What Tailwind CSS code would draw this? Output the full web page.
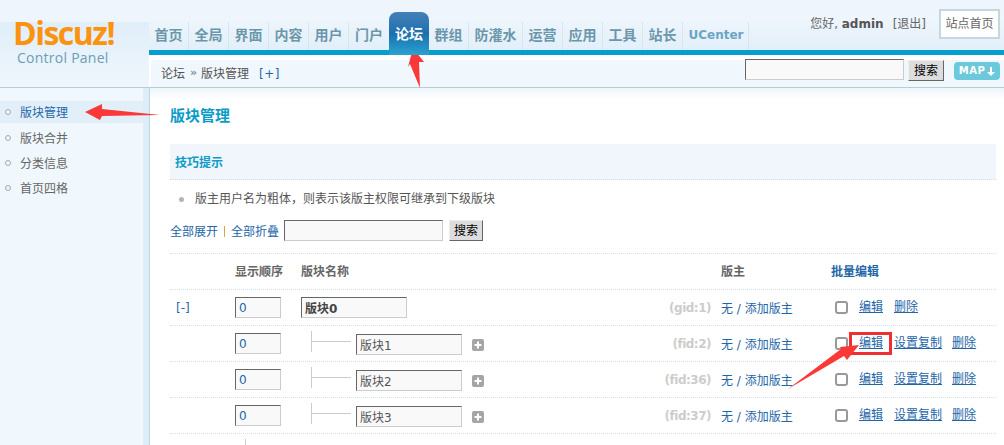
<!DOCTYPE html>
<html lang="zh-CN">
<head>
    <meta charset="UTF-8">
    <title>Discuz! Control Panel</title>
    <script src="https://cdn.jsdelivr.net/npm/@tailwindcss/browser@4"></script>
</head>
<body class="relative w-[1004px] h-[445px] overflow-hidden bg-white text-[12px] text-[#666] font-['DejaVu_Sans','Noto_Sans_CJK_SC',sans-serif]">
    <!-- header -->
    <header class="flex h-[88px] border-b border-[#b8cdd6] bg-white">
        <div class="w-[149px] h-[87px] bg-[#eef5fc]">
            <div class="mt-[22px] h-[61px] w-[149px] pl-[13px] bg-gradient-to-b from-[#e0eef9] to-[#eef6fc]">
                <div class="text-[32px] leading-[22px] font-bold tracking-[-1.5px] text-[#fb9311] font-['Open_Sans',sans-serif]">Discuz!</div>
                <div class="pl-[4px] mt-[5px] text-[14px] leading-[18px] tracking-[0.25px] text-[#6c9eb4] font-['Open_Sans',sans-serif]">Control Panel</div>
            </div>
        </div>
        <div class="flex-1 flex flex-col">
            <div class="flex justify-between h-[50px] bg-gradient-to-b from-[#eef5fc] from-40% to-[#e2eff9]">
                <nav class="flex items-end h-[50px] text-[14px] font-bold text-[#6b97ab]">
                    <a class="w-10 h-[28px] leading-[27px] text-center border-r border-[#d8e6ef]">首页</a>
                    <a class="w-10 h-[28px] leading-[27px] text-center border-r border-[#d8e6ef]">全局</a>
                    <a class="w-10 h-[28px] leading-[27px] text-center border-r border-[#d8e6ef]">界面</a>
                    <a class="w-10 h-[28px] leading-[27px] text-center border-r border-[#d8e6ef]">内容</a>
                    <a class="w-10 h-[28px] leading-[27px] text-center border-r border-[#d8e6ef]">用户</a>
                    <a class="w-10 h-[28px] leading-[27px] text-center">门户</a>
                    <a class="relative z-10 w-10 h-[43px] -mb-[5px] pt-[12px] leading-[20px] text-center text-white rounded-t-[8px] bg-gradient-to-b from-[#4480b8] via-[#1b70ae] to-[#2aa3d0]">论坛</a>
                    <a class="w-10 h-[28px] leading-[27px] text-center border-r border-[#d8e6ef]">群组</a>
                    <a class="w-[54px] h-[28px] leading-[27px] text-center border-r border-[#d8e6ef]">防灌水</a>
                    <a class="w-10 h-[28px] leading-[27px] text-center border-r border-[#d8e6ef]">运营</a>
                    <a class="w-10 h-[28px] leading-[27px] text-center border-r border-[#d8e6ef]">应用</a>
                    <a class="w-10 h-[28px] leading-[27px] text-center border-r border-[#d8e6ef]">工具</a>
                    <a class="w-10 h-[28px] leading-[27px] text-center border-r border-[#d8e6ef]">站长</a>
                    <a class="w-[66px] h-[28px] pl-[1px] leading-[27px] text-center text-[12px] text-[#6aa5c4] border-r border-[#d8e6ef]">UCenter</a>
                </nav>
                <div class="flex items-start pr-[4px]">
                    <span class="mt-[16px] leading-[16px] text-[#666]">您好, <b class="text-[#555]">admin</b></span>
                    <span class="mt-[16px] ml-[9px] leading-[16px] text-[#666]">[退出]</span>
                    <a class="mt-[9px] ml-[13px] w-[61px] h-[30px] leading-[26px] text-center bg-white border-2 border-[#c5d8de]">站点首页</a>
                </div>
            </div>
            <div class="h-[5px] bg-[#069ece]"></div>
            <div class="flex flex-1 pl-[2px] pt-[5px]">
                <div class="flex-1 flex items-center justify-between pl-[10px] pr-[4px] bg-[#f0f7fd]">
                    <div class="flex items-center text-[#555]">
                        <span>论坛</span>
                        <span class="ml-[5px] mr-[4px] w-[7px] text-[11px] font-bold text-[#7a8f9a]">»</span>
                        <span>版块管理</span>
                        <span class="ml-[10px] text-[#2366a8] tracking-[0.5px]">[+]</span>
                    </div>
                    <div class="flex items-start self-start -mt-[1px]">
                        <input class="w-[159px] h-[21px] px-1 bg-[#f9f9f9] border border-t-[#666] border-l-[#666] border-r-[#ccc] border-b-[#ccc]">
                        <button class="ml-[4px] mt-[1px] w-[36px] h-[21px] text-black bg-[#ddd] border border-t-[#eee] border-l-[#eee] border-r-[#666] border-b-[#666]">搜索</button>
                        <span class="flex items-center justify-center gap-[2px] ml-[10px] mt-[3px] w-[46px] h-[18px] rounded-[4px] bg-[#6cc9dc] text-[10px] leading-none font-bold tracking-[0.5px] text-white">MAP
                            <svg width="8" height="9" viewBox="0 0 8 9"><path d="M3 0h2v5h3L4 9 0 5h3z" fill="#fff"/></svg>
                        </span>
                    </div>
                </div>
            </div>
        </div>
    </header>

    <div class="flex h-[357px]">
        <!-- sidebar -->
        <aside class="w-[143px] bg-[#f0f8fd] pt-[13px]">
            <a class="flex items-center h-[22px] pl-[5px] gap-[9px] bg-[#e2eff9] text-[#2366a8]"><i class="w-[6px] h-[6px] rounded-full border border-[#aaa] bg-[#f4f4f4]"></i><span class="mt-[2px]">版块管理</span></a>
            <a class="flex items-center h-[25px] pl-[5px] gap-[9px] mt-[2px]"><i class="w-[6px] h-[6px] rounded-full border border-[#aaa] bg-[#f4f4f4]"></i><span class="mt-[2px]">版块合并</span></a>
            <a class="flex items-center h-[25px] pl-[5px] gap-[9px]"><i class="w-[6px] h-[6px] rounded-full border border-[#aaa] bg-[#f4f4f4]"></i><span class="mt-[2px]">分类信息</span></a>
            <a class="flex items-center h-[25px] pl-[5px] gap-[9px]"><i class="w-[6px] h-[6px] rounded-full border border-[#aaa] bg-[#f4f4f4]"></i><span class="mt-[2px]">首页四格</span></a>
        </aside>
        <div class="w-[7px] bg-[#deeef9] border-r border-[#b8d6e4]"></div>

        <!-- main -->
        <main class="flex-1 pl-[20px] pr-[8px] bg-gradient-to-b from-[#eef5fa] to-white to-[12px] bg-no-repeat">
            <h3 class="pt-[18px] h-[56px] text-[15px] leading-[20px] font-bold text-[#0d9cc8]">版块管理</h3>
            <div class="h-[36px] pl-[5px] pt-[2px] leading-[35px] bg-[#f0f6fc] border-b border-dotted border-[#cfdde8] font-bold text-[#0d9cc8]">技巧提示</div>
            <div class="flex items-center h-[38px] pl-[9px] gap-[11px] text-[#555]">
                <i class="w-[5px] h-[5px] rounded-full bg-[#b5b5b5]"></i>
                <span>版主用户名为粗体，则表示该版主权限可继承到下级版块</span>
            </div>
            <div class="flex items-center h-[23px] mt-[1px] text-[#2366a8]">
                <a class="mt-[2px]">全部展开</a>
                <span class="mx-[6px] mt-[2px] w-px h-[11px] bg-[#e0a050]"></span>
                <a class="mt-[2px]">全部折叠</a>
                <input class="ml-[5px] w-[159px] h-[21px] px-1 bg-[#f9f9f9] border border-t-[#666] border-l-[#666] border-r-[#ccc] border-b-[#ccc]">
                <button class="ml-[6px] w-[34px] h-[21px] text-black bg-[#ddd] border border-t-[#eee] border-l-[#eee] border-r-[#666] border-b-[#666]">搜索</button>
            </div>

            <!-- forum table -->
            <div class="mt-[11px] border-t border-dotted border-[#d5e0e8]">
                <div class="grid grid-cols-[65px_66px_410px_120px_1fr] items-center h-[36px] border-b border-dotted border-[#d5e0e8] font-bold">
                    <span></span>
                    <span>显示顺序</span>
                    <span>版块名称</span>
                    <span class="pl-[10px]">版主</span>
                    <span class="text-[#2366a8]">批量编辑</span>
                </div>
                <div class="grid grid-cols-[65px_66px_410px_120px_1fr] items-center h-[36px] border-b border-dotted border-[#d5e0e8]">
                    <a class="pl-[6px] mt-[1px] text-[#2366a8]">[-]</a>
                    <input value="0" class="w-[46px] h-[21px] px-[3px] text-[#2366a8] bg-[#f9f9f9] border border-t-[#666] border-l-[#666] border-r-[#ccc] border-b-[#ccc]">
                    <div class="flex items-center justify-between">
                        <input value="版块0" class="w-[106px] h-[21px] px-[3px] font-bold text-[#444] bg-[#f9f9f9] border border-t-[#666] border-l-[#666] border-r-[#ccc] border-b-[#ccc]">
                        <span class="text-[#ccc] font-bold tracking-[-0.5px]">(gid:1)</span>
                    </div>
                    <span class="pl-[10px] mt-[3px] text-[#2366a8]">无 / 添加版主</span>
                    <div class="flex items-center pl-[4px] -mt-[1px] text-[#2366a8] underline">
                        <input type="checkbox" class="appearance-none w-[13px] h-[13px] bg-white border-2 border-[#999] rounded-[3px]">
                        <a class="ml-[11px]">编辑</a><a class="ml-[11px]">删除</a>
                    </div>
                </div>
                <div class="grid grid-cols-[65px_66px_410px_120px_1fr] items-center h-[36px] border-b border-dotted border-[#d5e0e8]">
                    <span></span>
                    <input value="0" class="w-[46px] h-[21px] px-[3px] text-[#2366a8] bg-[#f9f9f9] border border-t-[#666] border-l-[#666] border-r-[#ccc] border-b-[#ccc]">
                    <div class="flex items-center">
                        <div class="flex items-center ml-[10px] mb-[5px] w-[40px] h-[21px] border-l border-[#ccc]"><div class="w-full h-px bg-[#ccc]"></div></div>
                        <input value="版块1" class="ml-[5px] mt-[2px] w-[106px] h-[21px] px-[3px] text-[#555] bg-[#f9f9f9] border border-t-[#666] border-l-[#666] border-r-[#ccc] border-b-[#ccc]">
                        <svg class="ml-[10px] mt-[2px]" width="12" height="12" viewBox="0 0 12 12"><rect width="12" height="12" rx="2" fill="#a5a5a5"/><path d="M5 2.500h2V5h2.500v2H7v2.500H5V7H2.500V5H5z" fill="#fff"/></svg>
                        <span class="ml-auto text-[#ccc] font-bold tracking-[-0.5px]">(fid:2)</span>
                    </div>
                    <span class="pl-[10px] mt-[3px] text-[#2366a8]">无 / 添加版主</span>
                    <div class="flex items-center pl-[4px] -mt-[1px] text-[#2366a8] underline">
                        <input type="checkbox" class="appearance-none w-[13px] h-[13px] bg-white border-2 border-[#999] rounded-[3px]">
                        <a class="ml-[11px]">编辑</a><a class="ml-[11px]">设置复制</a><a class="ml-[10px]">删除</a>
                    </div>
                </div>
                <div class="grid grid-cols-[65px_66px_410px_120px_1fr] items-center h-[36px] border-b border-dotted border-[#d5e0e8]">
                    <span></span>
                    <input value="0" class="w-[46px] h-[21px] px-[3px] text-[#2366a8] bg-[#f9f9f9] border border-t-[#666] border-l-[#666] border-r-[#ccc] border-b-[#ccc]">
                    <div class="flex items-center">
                        <div class="flex items-center ml-[10px] mb-[5px] w-[40px] h-[21px] border-l border-[#ccc]"><div class="w-full h-px bg-[#ccc]"></div></div>
                        <input value="版块2" class="ml-[5px] mt-[2px] w-[106px] h-[21px] px-[3px] text-[#555] bg-[#f9f9f9] border border-t-[#666] border-l-[#666] border-r-[#ccc] border-b-[#ccc]">
                        <svg class="ml-[10px] mt-[2px]" width="12" height="12" viewBox="0 0 12 12"><rect width="12" height="12" rx="2" fill="#a5a5a5"/><path d="M5 2.500h2V5h2.500v2H7v2.500H5V7H2.500V5H5z" fill="#fff"/></svg>
                        <span class="ml-auto text-[#ccc] font-bold tracking-[-0.5px]">(fid:36)</span>
                    </div>
                    <span class="pl-[10px] mt-[3px] text-[#2366a8]">无 / 添加版主</span>
                    <div class="flex items-center pl-[4px] -mt-[1px] text-[#2366a8] underline">
                        <input type="checkbox" class="appearance-none w-[13px] h-[13px] bg-white border-2 border-[#999] rounded-[3px]">
                        <a class="ml-[11px]">编辑</a><a class="ml-[11px]">设置复制</a><a class="ml-[10px]">删除</a>
                    </div>
                </div>
                <div class="grid grid-cols-[65px_66px_410px_120px_1fr] items-center h-[36px] border-b border-dotted border-[#d5e0e8]">
                    <span></span>
                    <input value="0" class="w-[46px] h-[21px] px-[3px] text-[#2366a8] bg-[#f9f9f9] border border-t-[#666] border-l-[#666] border-r-[#ccc] border-b-[#ccc]">
                    <div class="flex items-center">
                        <div class="flex items-center ml-[10px] mb-[5px] w-[40px] h-[21px] border-l border-[#ccc]"><div class="w-full h-px bg-[#ccc]"></div></div>
                        <input value="版块3" class="ml-[5px] mt-[2px] w-[106px] h-[21px] px-[3px] text-[#555] bg-[#f9f9f9] border border-t-[#666] border-l-[#666] border-r-[#ccc] border-b-[#ccc]">
                        <svg class="ml-[10px] mt-[2px]" width="12" height="12" viewBox="0 0 12 12"><rect width="12" height="12" rx="2" fill="#a5a5a5"/><path d="M5 2.500h2V5h2.500v2H7v2.500H5V7H2.500V5H5z" fill="#fff"/></svg>
                        <span class="ml-auto text-[#ccc] font-bold tracking-[-0.5px]">(fid:37)</span>
                    </div>
                    <span class="pl-[10px] mt-[3px] text-[#2366a8]">无 / 添加版主</span>
                    <div class="flex items-center pl-[4px] -mt-[1px] text-[#2366a8] underline">
                        <input type="checkbox" class="appearance-none w-[13px] h-[13px] bg-white border-2 border-[#999] rounded-[3px]">
                        <a class="ml-[11px]">编辑</a><a class="ml-[11px]">设置复制</a><a class="ml-[10px]">删除</a>
                    </div>
                </div>
                <div class="ml-[75px] mt-[5px] w-px h-[10px] bg-[#ccc]"></div>
            </div>
        </main>
    </div>

    <!-- red annotation marks drawn over the screenshot -->
    <div class="absolute left-[849px] top-[332px] w-[43px] h-[23px] border-[3px] border-[#f03030]"></div>
    <svg class="absolute left-0 top-0 pointer-events-none" width="1004" height="445" viewBox="0 0 1004 445">
        <polygon points="413,48 424,62 419,62 420,88 410,64 408,67" fill="#fb3838"/>
        <polygon points="85,112 102,104 102,109 160,115 102,116 100,120" fill="#fb3838"/>
        <polygon points="859,345 847,360 844,356 788,389 841,349 840,347" fill="#fb3838"/>
    </svg>
</body>
</html>
